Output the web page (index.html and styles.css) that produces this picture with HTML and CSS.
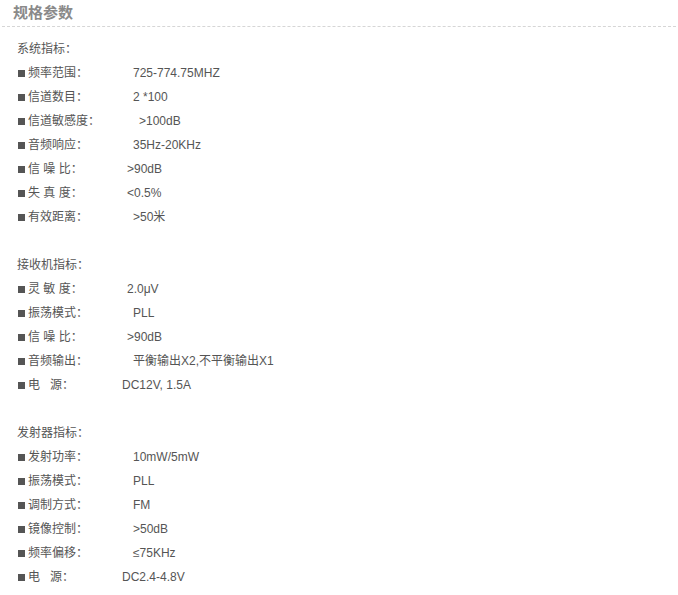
FILE: index.html
```html
<!DOCTYPE html>
<html lang="zh-CN">
<head>
    <meta charset="UTF-8">
    <meta name="viewport" content="width=device-width, initial-scale=1.0">
    <title>规格参数</title>
    <link rel="stylesheet" href="styles.css">
</head>
<body>
    <h2 class="spec-title">规格参数</h2>

    <div class="spec-body">
        <!-- 系统指标 -->
        <div class="spec-group">
            <p class="group-name">系统指标：</p>
            <div class="spec-row"><span class="spec-label">频率范围：</span><span class="spec-value">725-774.75MHZ</span></div>
            <div class="spec-row"><span class="spec-label">信道数目：</span><span class="spec-value">2 *100</span></div>
            <div class="spec-row far"><span class="spec-label">信道敏感度：</span><span class="spec-value">&gt;100dB</span></div>
            <div class="spec-row"><span class="spec-label">音频响应：</span><span class="spec-value">35Hz-20KHz</span></div>
            <div class="spec-row near"><span class="spec-label">信 噪 比：</span><span class="spec-value">&gt;90dB</span></div>
            <div class="spec-row near"><span class="spec-label">失 真 度：</span><span class="spec-value">&lt;0.5%</span></div>
            <div class="spec-row"><span class="spec-label">有效距离：</span><span class="spec-value">&gt;50米</span></div>
        </div>

        <!-- 接收机指标 -->
        <div class="spec-group">
            <p class="group-name">接收机指标：</p>
            <div class="spec-row near"><span class="spec-label">灵 敏 度：</span><span class="spec-value">2.0μV</span></div>
            <div class="spec-row"><span class="spec-label">振荡模式：</span><span class="spec-value">PLL</span></div>
            <div class="spec-row near"><span class="spec-label">信 噪 比：</span><span class="spec-value">&gt;90dB</span></div>
            <div class="spec-row"><span class="spec-label">音频输出：</span><span class="spec-value">平衡输出X2,不平衡输出X1</span></div>
            <div class="spec-row nearer"><span class="spec-label">电&nbsp;&nbsp;&nbsp;源：</span><span class="spec-value">DC12V, 1.5A</span></div>
        </div>

        <!-- 发射器指标 -->
        <div class="spec-group">
            <p class="group-name">发射器指标：</p>
            <div class="spec-row"><span class="spec-label">发射功率：</span><span class="spec-value">10mW/5mW</span></div>
            <div class="spec-row"><span class="spec-label">振荡模式：</span><span class="spec-value">PLL</span></div>
            <div class="spec-row"><span class="spec-label">调制方式：</span><span class="spec-value">FM</span></div>
            <div class="spec-row"><span class="spec-label">镜像控制：</span><span class="spec-value">&gt;50dB</span></div>
            <div class="spec-row"><span class="spec-label">频率偏移：</span><span class="spec-value">≤75KHz</span></div>
            <div class="spec-row nearer"><span class="spec-label">电&nbsp;&nbsp;&nbsp;源：</span><span class="spec-value">DC2.4-4.8V</span></div>
        </div>
    </div>
</body>
</html>
```

FILE: styles.css
```css
body {
    font-family: 'Liberation Sans', 'Noto Sans CJK SC', sans-serif;
    font-size: 12px;
    margin: 0;
    padding: 0;
    background-color: #fff;
    color: #555;
}

.spec-title {
    margin: 0 2px;
    padding-left: 11px;
    font-size: 15px;
    font-weight: bold;
    line-height: 26px;
    height: 26px;
    color: #8a8a8a;
    border-bottom: 1px dashed #d6d6d6;
}

.spec-body {
    padding: 10px 0 0 17px;
}

.spec-group {
    margin-bottom: 24px;
}

.group-name {
    margin: 0;
    line-height: 24px;
}

.spec-row {
    display: flex;
    align-items: center;
    line-height: 24px;
}

/* square bullet */
.spec-row::before {
    content: '';
    width: 7px;
    height: 7px;
    margin: 1px 3px 0 1px;
    background: #555;
}

.spec-label {
    width: 105px;
    white-space: pre;
}

.spec-row.far .spec-label { width: 111px; }
.spec-row.near .spec-label { width: 99px; }
.spec-row.nearer .spec-label { width: 94px; }

.spec-value {
    white-space: nowrap;
}
```
